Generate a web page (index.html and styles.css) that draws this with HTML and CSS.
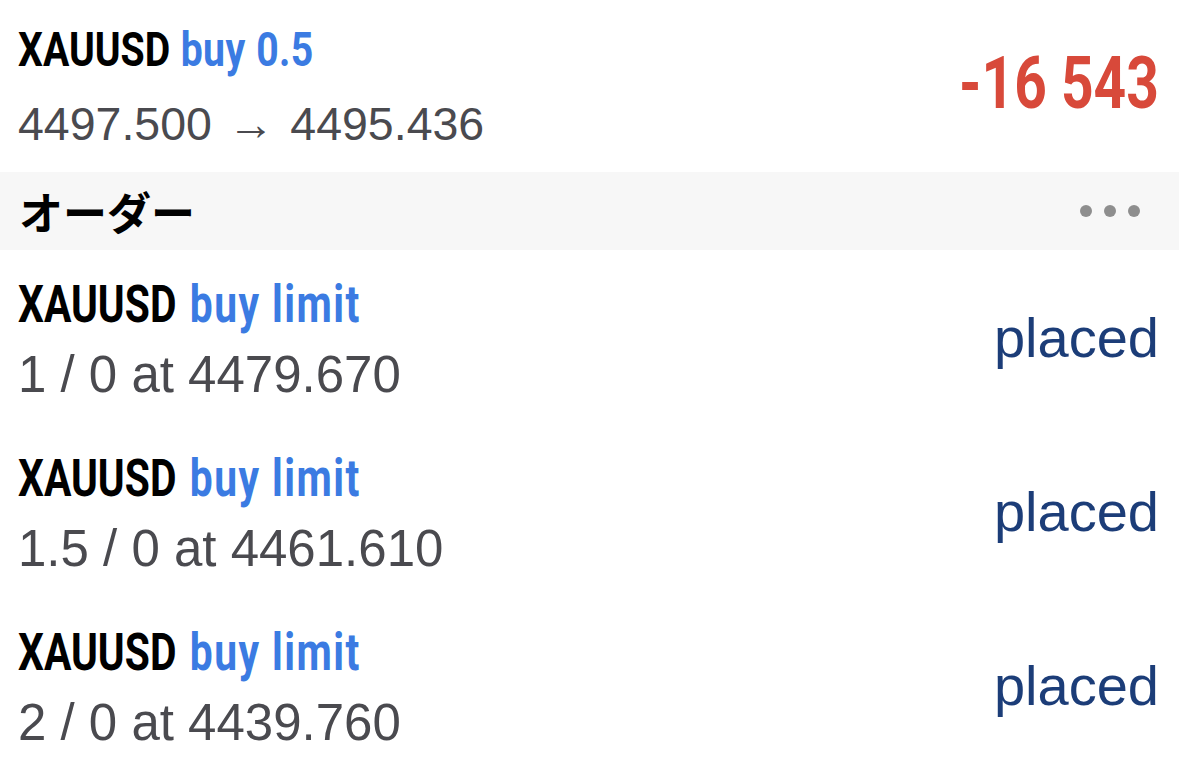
FILE: index.html
```html
<!DOCTYPE html>
<html lang="ja">
<head>
<meta charset="utf-8">
<link rel="stylesheet" href="styles.css">
</head>
<body>
<div class="list">
  <div class="row row-position">
    <div class="info">
      <div class="title"><span class="sym">XAUUSD</span> <span class="kind">buy 0.5</span></div>
      <div class="sub">4497.500 → 4495.436</div>
    </div>
    <div class="profit">-16 543</div>
  </div>
  <div class="section">
    <div class="section-title">オーダー</div>
    <div class="more"><span class="dot"></span><span class="dot"></span><span class="dot"></span></div>
  </div>
  <div class="row">
    <div class="info">
      <div class="title"><span class="sym">XAUUSD</span> <span class="kind">buy limit</span></div>
      <div class="sub">1 / 0 at 4479.670</div>
    </div>
    <div class="state">placed</div>
  </div>
  <div class="row">
    <div class="info">
      <div class="title"><span class="sym">XAUUSD</span> <span class="kind">buy limit</span></div>
      <div class="sub">1.5 / 0 at 4461.610</div>
    </div>
    <div class="state">placed</div>
  </div>
  <div class="row">
    <div class="info">
      <div class="title"><span class="sym">XAUUSD</span> <span class="kind">buy limit</span></div>
      <div class="sub">2 / 0 at 4439.760</div>
    </div>
    <div class="state">placed</div>
  </div>
</div>
</body>
</html>
```
FILE: styles.css
```css
html, body {
  margin: 0;
  padding: 0;
  background: #ffffff;
}
body {
  width: 1179px;
  height: 772px;
  overflow: hidden;
  font-family: "Liberation Sans", Arial, sans-serif;
}
.list {
  display: flex;
  flex-direction: column;
}
.row {
  height: 174px;
  box-sizing: border-box;
  display: flex;
  justify-content: space-between;
  align-items: center;
  padding: 0 20px 0 18px;
}
.row-position {
  height: 172px;
}
.info {
  display: flex;
  flex-direction: column;
  align-self: flex-start;
  padding-top: 19px;
}
.row-position .info {
  padding-top: 14px;
}
.title {
  font-family: Roboto, "Liberation Sans", sans-serif;
  font-weight: 700;
  font-size: 51px;
  line-height: 72px;
  color: #000000;
  white-space: nowrap;
  word-spacing: 4px;
  transform: scaleX(0.8);
  transform-origin: left center;
}
.title .kind {
  letter-spacing: 1.8px;
  word-spacing: 0;
}
.row-position .title {
  font-size: 49px;
  word-spacing: 1px;
}
.row-position .title .kind {
  letter-spacing: 0.4px;
  word-spacing: 1px;
}
.kind {
  color: #3b7be2;
}
.sub {
  font-size: 51px;
  line-height: 68px;
  color: #4a4a4f;
  white-space: nowrap;
}
.row-position .sub {
  font-size: 46.5px;
  line-height: 76px;
  word-spacing: 3px;
}
.profit {
  font-family: Roboto, "Liberation Sans", sans-serif;
  font-weight: 700;
  font-size: 72px;
  color: #d8493a;
  white-space: nowrap;
  margin-bottom: 5px;
  transform: scaleX(0.79);
  transform-origin: right center;
}
.state {
  font-size: 56px;
  color: #1c3d78;
}
.section {
  height: 78px;
  background: #f7f7f7;
  display: flex;
  align-items: center;
  justify-content: space-between;
  padding: 0 39px 0 19px;
}
.section-title {
  font-family: "Noto Sans CJK JP", sans-serif;
  font-weight: 700;
  font-size: 44px;
  color: #000000;
}
.more {
  display: flex;
  gap: 12px;
}
.dot {
  width: 12px;
  height: 12px;
  border-radius: 50%;
  background: #8e8e8e;
}
```
